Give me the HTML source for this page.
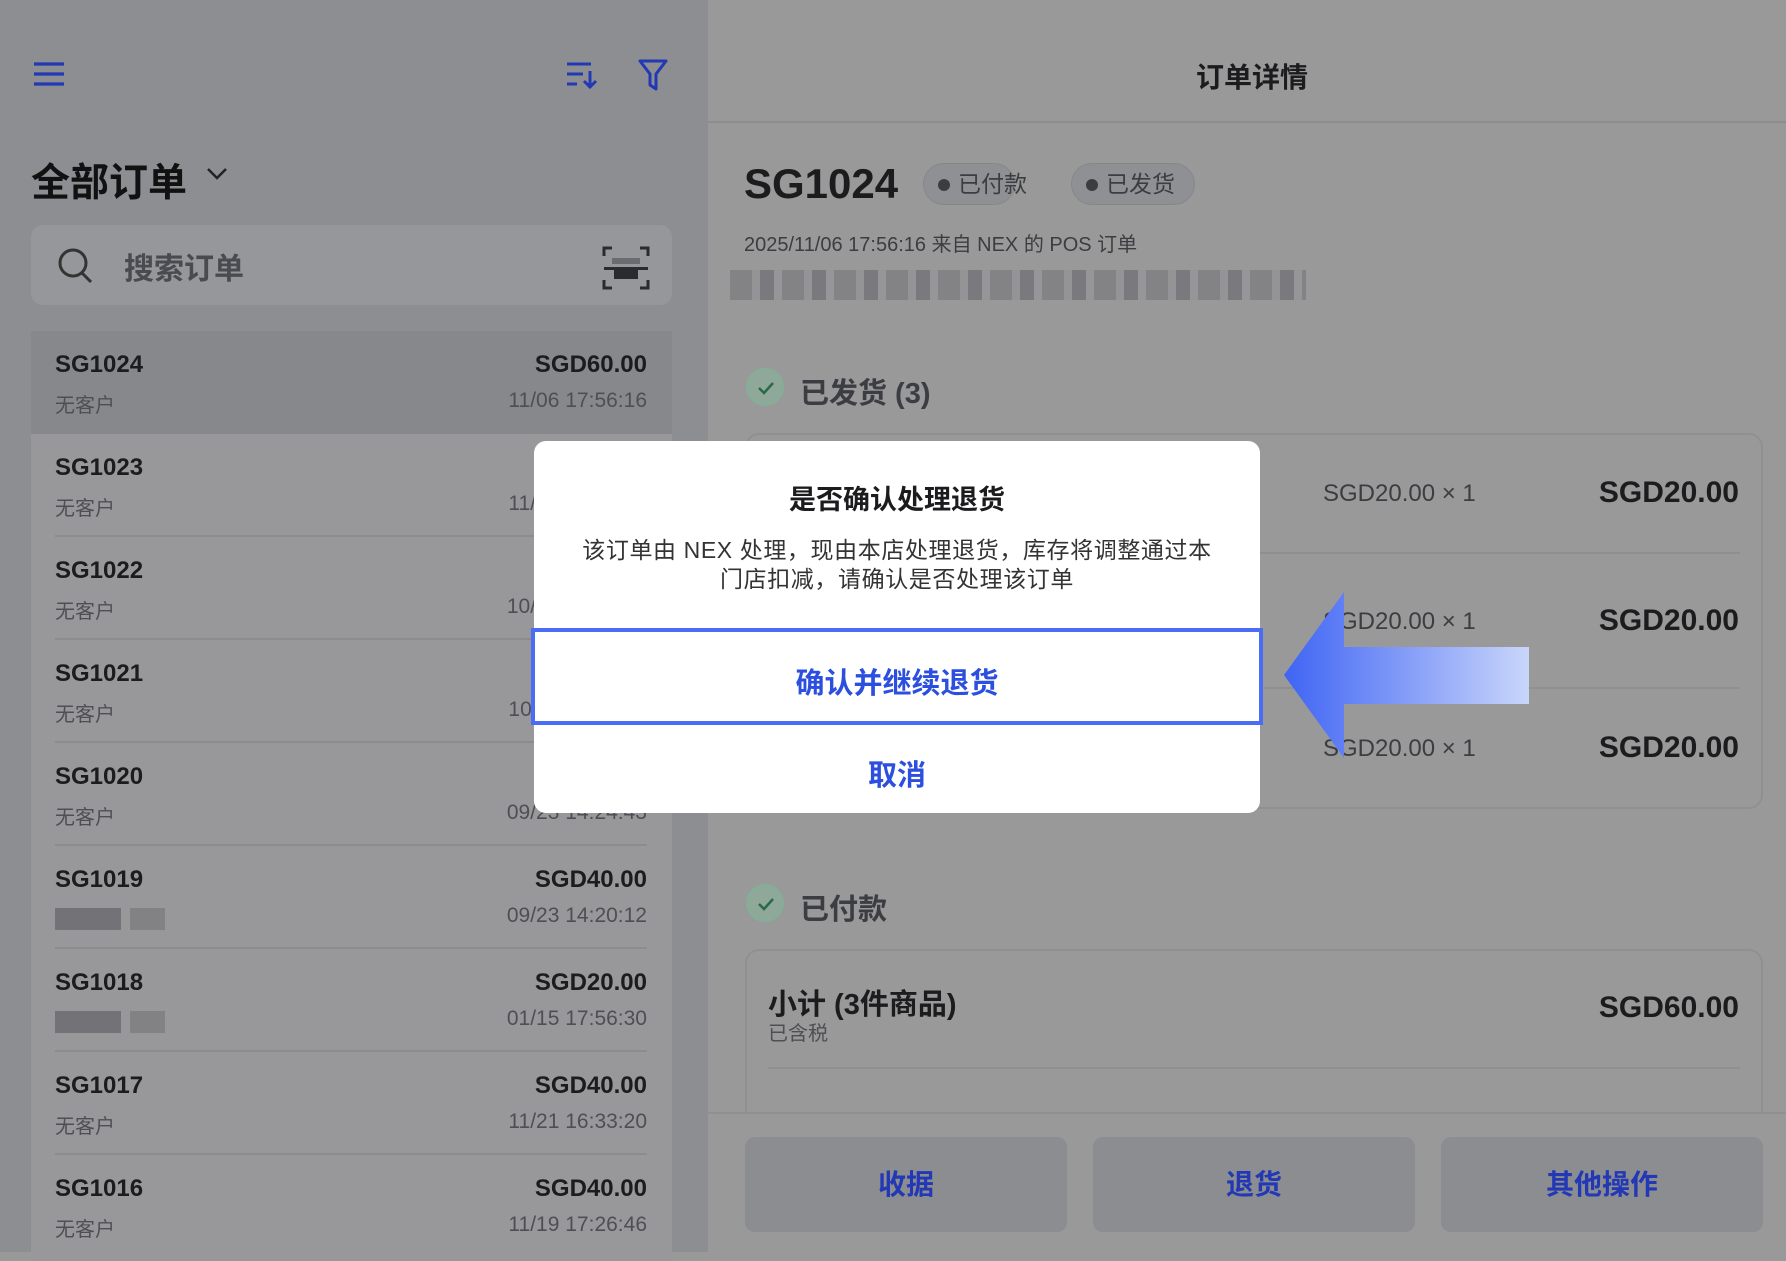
<!DOCTYPE html>
<html><head><meta charset="utf-8"><style>
*{box-sizing:border-box;margin:0;padding:0}
body{width:1786px;height:1252px;overflow:hidden;position:relative;background:#999;font-family:"Liberation Sans","Noto Sans CJK SC",sans-serif;color:#1c1c1e}
.abs{position:absolute}
#left{left:0;top:0;width:708px;height:1252px;background:#8d8e92}
#list{left:31px;top:331px;width:641px;height:930px;background:#98989a}
.row{position:absolute;left:0;width:641px;height:103px}
.row .id{position:absolute;left:24px;top:20px;font-size:24px;font-weight:600;color:#1c1c1e}
.row .sub{position:absolute;left:24px;top:58px;font-size:20px;color:#4e4f54}
.row .amt{position:absolute;right:25px;top:20px;font-size:24px;font-weight:700;color:#1c1c1e}
.row .dt{position:absolute;right:25px;top:58px;font-size:21px;color:#4e4f54}
.row .sep{position:absolute;left:24px;right:25px;bottom:0;height:2px;background:#8c8c8e}
.blur{position:absolute;left:24px;top:62px;width:110px;height:22px;background:linear-gradient(90deg,#6a6a6e 0 60%,transparent 60% 68%,#7c7c80 68% 100%);opacity:.8}
.pill{position:absolute;top:163px;height:42px;border-radius:21px;background:#8f9094;border:1px solid #86878b;font-size:23px;color:#3c3d42;line-height:40px;padding-left:34px;white-space:nowrap}
.pill:before{content:"";position:absolute;left:14px;top:15px;width:12px;height:12px;border-radius:6px;background:#3c3d42}
.chk{position:absolute;width:38px;height:38px;border-radius:19px;background:#8fa89a;border:3px solid #86ad98}
.btn{position:absolute;top:1137px;height:95px;width:322px;border-radius:10px;background:#8c8d91;color:#2238b5;font-size:28px;font-weight:700;text-align:center;line-height:95px}
</style></head><body>
<div id="left" class="abs"></div>
<svg class="abs" style="left:32px;top:60px" width="34" height="28"><g stroke="#2238b5" stroke-width="3.2"><line x1="2" y1="4" x2="32" y2="4"/><line x1="2" y1="14" x2="32" y2="14"/><line x1="2" y1="24" x2="32" y2="24"/></g></svg>
<svg class="abs" style="left:565px;top:60px" width="34" height="30"><g stroke="#2238b5" stroke-width="3" fill="none"><line x1="2" y1="4" x2="26" y2="4"/><line x1="2" y1="14" x2="18" y2="14"/><line x1="2" y1="24" x2="12" y2="24"/><line x1="25" y1="11" x2="25" y2="27"/><polyline points="19,21 25,27 31,21"/></g></svg>
<svg class="abs" style="left:638px;top:58px" width="30" height="34"><path d="M2 3 H28 L18 16 V31 L12 27 V16 Z" stroke="#2238b5" stroke-width="3" fill="none" stroke-linejoin="round"/></svg>
<div class="abs" style="left:31px;top:152px;font-size:39px;font-weight:700;color:#111">全部订单</div>
<svg class="abs" style="left:205px;top:166px" width="24" height="16"><polyline points="3,3 12,12 21,3" stroke="#222" stroke-width="2.5" fill="none"/></svg>
<div class="abs" style="left:31px;top:225px;width:641px;height:80px;border-radius:12px;background:#96979b"></div>
<svg class="abs" style="left:56px;top:246px" width="40" height="40"><circle cx="17" cy="17" r="13" stroke="#333" stroke-width="3" fill="none"/><line x1="26" y1="27" x2="35" y2="36" stroke="#333" stroke-width="3"/></svg>
<div class="abs" style="left:124px;top:244px;font-size:30px;font-weight:700;color:#4a4b50">搜索订单</div>
<svg class="abs" style="left:602px;top:246px" width="48" height="44"><g stroke="#2a2b30" stroke-width="3" fill="none"><polyline points="2,10 2,2 10,2"/><polyline points="38,2 46,2 46,10"/><polyline points="2,34 2,42 10,42"/><polyline points="46,34 46,42 38,42"/></g><rect x="10" y="12" width="28" height="6" fill="#6a6b70"/><rect x="2" y="21" width="44" height="3" fill="#2a2b30"/><rect x="12" y="24" width="24" height="9" fill="#2a2b30"/></svg>
<div id="list" class="abs">
<div class="row" style="top:0;background:#87888c"><div class="id">SG1024</div><div class="sub">无客户</div><div class="amt">SGD60.00</div><div class="dt">11/06 17:56:16</div></div>
<div class="row" style="top:103px"><div class="id">SG1023</div><div class="sub">无客户</div><div class="amt">SGD40.00</div><div class="dt">11/05 10:12:33</div><div class="sep"></div></div>
<div class="row" style="top:206px"><div class="id">SG1022</div><div class="sub">无客户</div><div class="amt">SGD40.00</div><div class="dt">10/28 15:20:10</div><div class="sep"></div></div>
<div class="row" style="top:309px"><div class="id">SG1021</div><div class="sub">无客户</div><div class="amt">SGD20.00</div><div class="dt">10/12 11:08:54</div><div class="sep"></div></div>
<div class="row" style="top:412px"><div class="id">SG1020</div><div class="sub">无客户</div><div class="amt">SGD40.00</div><div class="dt">09/23 14:24:43</div><div class="sep"></div></div>
<div class="row" style="top:515px"><div class="id">SG1019</div><div class="blur"></div><div class="amt">SGD40.00</div><div class="dt">09/23 14:20:12</div><div class="sep"></div></div>
<div class="row" style="top:618px"><div class="id">SG1018</div><div class="blur"></div><div class="amt">SGD20.00</div><div class="dt">01/15 17:56:30</div><div class="sep"></div></div>
<div class="row" style="top:721px"><div class="id">SG1017</div><div class="sub">无客户</div><div class="amt">SGD40.00</div><div class="dt">11/21 16:33:20</div><div class="sep"></div></div>
<div class="row" style="top:824px"><div class="id">SG1016</div><div class="sub">无客户</div><div class="amt">SGD40.00</div><div class="dt">11/19 17:26:46</div></div>
</div>
<div class="abs" style="left:708px;top:121px;width:1078px;height:2px;background:#8d8d8f"></div>
<div class="abs" style="left:1196px;top:56px;font-size:28px;font-weight:700;color:#1c1c1e">订单详情</div>
<div class="abs" style="left:744px;top:160px;font-size:42px;font-weight:600;color:#1c1c1e">SG1024</div>
<div class="pill" style="left:923px;width:92px">已付款</div>
<div class="pill" style="left:1071px;width:124px">已发货</div>
<div class="abs" style="left:744px;top:228px;font-size:20px;color:#3c3d42">2025/11/06 17:56:16 来自 NEX 的 POS 订单</div>
<div class="abs" style="left:730px;top:270px;width:576px;height:30px;background:repeating-linear-gradient(90deg,#7a7a7e 0 22px,#929296 22px 30px,#6d6d72 30px 44px,#959598 44px 52px);opacity:.7"></div>
<div class="chk" style="left:746px;top:368px"></div>
<svg class="abs" style="left:756px;top:378px" width="20" height="20"><polyline points="3,10 8,15 17,5" stroke="#2a6a48" stroke-width="2.5" fill="none"/></svg>
<div class="abs" style="left:800px;top:370px;font-size:29px;font-weight:600;color:#3c3d42">已发货 (3)</div>
<div class="abs" style="left:745px;top:433px;width:1018px;height:376px;border:2px solid #909092;border-radius:14px"></div>
<div class="abs" style="left:768px;top:552px;width:972px;height:2px;background:#8f8f91"></div>
<div class="abs" style="left:768px;top:687px;width:972px;height:2px;background:#8f8f91"></div>
<div class="abs" style="left:1323px;top:480px;font-size:24px;color:#3c3d42">SGD20.00 × 1</div>
<div class="abs" style="left:1323px;top:608px;font-size:24px;color:#3c3d42">SGD20.00 × 1</div>
<div class="abs" style="left:1323px;top:735px;font-size:24px;color:#3c3d42">SGD20.00 × 1</div>
<div class="abs" style="right:47px;top:476px;font-size:30px;font-weight:600">SGD20.00</div>
<div class="abs" style="right:47px;top:604px;font-size:30px;font-weight:600">SGD20.00</div>
<div class="abs" style="right:47px;top:731px;font-size:30px;font-weight:600">SGD20.00</div>
<div class="chk" style="left:746px;top:884px"></div>
<svg class="abs" style="left:756px;top:894px" width="20" height="20"><polyline points="3,10 8,15 17,5" stroke="#2a6a48" stroke-width="2.5" fill="none"/></svg>
<div class="abs" style="left:800px;top:886px;font-size:29px;font-weight:600;color:#3c3d42">已付款</div>
<div class="abs" style="left:745px;top:949px;width:1018px;height:200px;border:2px solid #909092;border-radius:14px"></div>
<div class="abs" style="left:768px;top:981px;font-size:29px;font-weight:600">小计 (3件商品)</div>
<div class="abs" style="left:768px;top:1017px;font-size:20px;color:#4e4f54">已含税</div>
<div class="abs" style="right:47px;top:991px;font-size:30px;font-weight:600">SGD60.00</div>
<div class="abs" style="left:768px;top:1067px;width:972px;height:2px;background:#8f8f91"></div>
<div class="abs" style="left:708px;top:1112px;width:1078px;height:140px;background:#999;border-top:2px solid #909092"></div>
<div class="btn" style="left:745px">收据</div>
<div class="btn" style="left:1093px">退货</div>
<div class="btn" style="left:1441px">其他操作</div>
<div class="abs" style="left:534px;top:441px;width:726px;height:372px;background:#fff;border-radius:12px"></div>
<div class="abs" style="left:534px;top:478px;width:726px;text-align:center;font-size:27px;font-weight:700;color:#1c1c1e">是否确认处理退货</div>
<div class="abs" style="left:544px;top:536px;width:706px;text-align:center;font-size:23px;line-height:29px;color:#333;white-space:nowrap;letter-spacing:0.6px">该订单由 NEX 处理，现由本店处理退货，库存将调整通过本<br>门店扣减，请确认是否处理该订单</div>
<div class="abs" style="left:531px;top:628px;width:732px;height:97px;border:4px solid #4b6cf5;background:#fff"></div>
<div class="abs" style="left:534px;top:660px;width:726px;text-align:center;font-size:29px;font-weight:700;color:#2c4fe0">确认并继续退货</div>
<div class="abs" style="left:534px;top:752px;width:726px;text-align:center;font-size:29px;font-weight:700;color:#2c4fe0">取消</div>
<svg class="abs" style="left:1280px;top:588px" width="254" height="175"><defs><linearGradient id="g" x1="0" x2="1"><stop offset="0" stop-color="#3f64f4"/><stop offset="1" stop-color="#c9d6fb"/></linearGradient></defs><polygon points="4,87 64,4 64,59 249,59 249,116 64,116 64,170" fill="url(#g)"/></svg>
</body></html>
